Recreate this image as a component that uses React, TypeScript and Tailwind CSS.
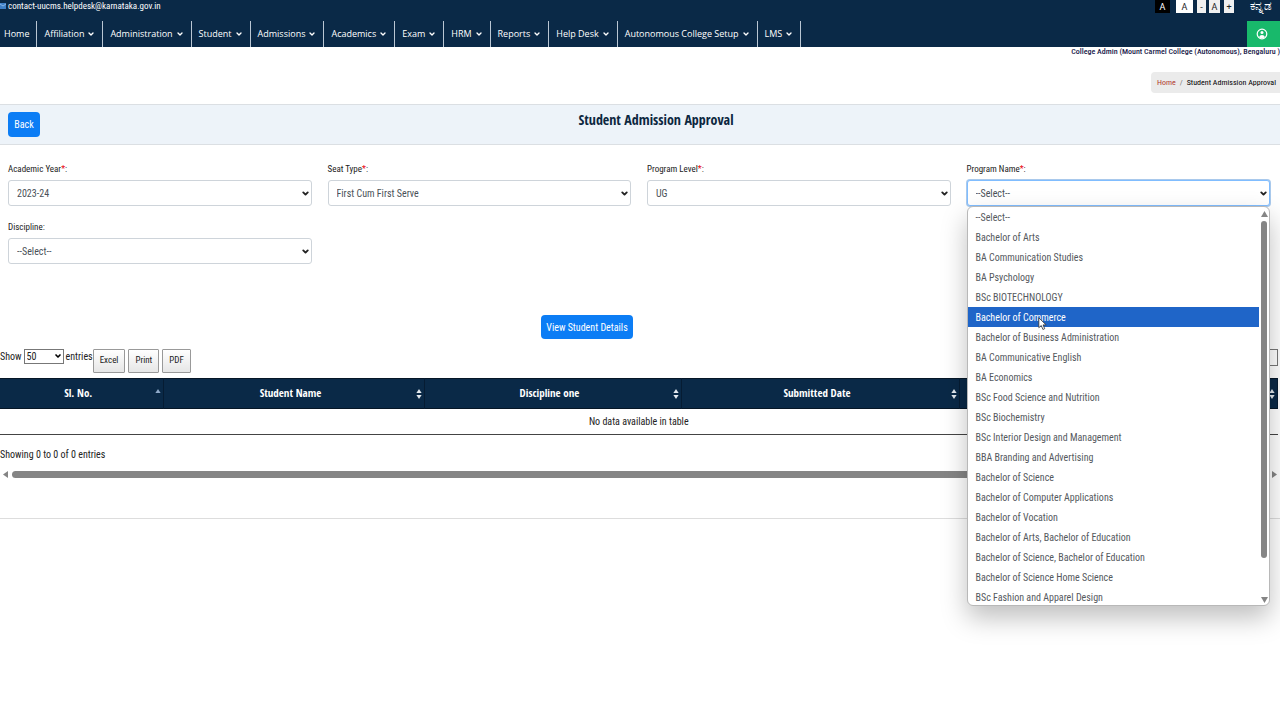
import { useState } from 'react';
import type { ReactNode } from 'react';
import { ChevronDown } from 'lucide-react';

const MENU = [
  'Affiliation',
  'Administration',
  'Student',
  'Admissions',
  'Academics',
  'Exam',
  'HRM',
  'Reports',
  'Help Desk',
  'Autonomous College Setup',
  'LMS',
];

const PROGRAMS = [
  '--Select--',
  'Bachelor of Arts',
  'BA Communication Studies',
  'BA Psychology',
  'BSc BIOTECHNOLOGY',
  'Bachelor of Commerce',
  'Bachelor of Business Administration',
  'BA Communicative English',
  'BA Economics',
  'BSc Food Science and Nutrition',
  'BSc Biochemistry',
  'BSc Interior Design and Management',
  'BBA Branding and Advertising',
  'Bachelor of Science',
  'Bachelor of Computer Applications',
  'Bachelor of Vocation',
  'Bachelor of Arts, Bachelor of Education',
  'Bachelor of Science, Bachelor of Education',
  'Bachelor of Science Home Science',
  'BSc Fashion and Apparel Design',
];

function Field({ id, label, required, options, active, children }: {
  id: string;
  label: string;
  required?: boolean;
  options: string[];
  active?: boolean;
  children?: ReactNode;
}) {
  return (
    <div>
      <label htmlFor={id} className="block h-[18px] mb-0.5 text-[9px] leading-[18px] text-[#222]">
        {label}
        {required && <span className="text-red-600">*</span>}:
      </label>
      <div className="relative">
        <select
          id={id}
          className={`block w-full h-[26px] pl-2 pr-5 appearance-none rounded-[3px] border bg-white text-[10px] text-[#495057] outline-none ${active ? 'border-[#80bdff] ring-1 ring-[#a9c9ec]' : 'border-[#ced4da]'}`}
        >
          {options.map(o => <option key={o}>{o}</option>)}
        </select>
        <ChevronDown className="absolute right-0.5 top-[9px] size-[9px] text-[#222] pointer-events-none" strokeWidth={5} />
        {children}
      </div>
    </div>
  );
}

function ProgramList() {
  const [hovered, setHovered] = useState(5);

  return (
    <div className="absolute left-0 top-full z-20 flex w-full rounded-md border border-[#b8b8b8] bg-white pb-px shadow-[0_12px_26px_rgba(0,0,0,0.25)]">
      <ul role="listbox" aria-label="Program Name" className="flex-1 h-[397px] overflow-hidden">
        {PROGRAMS.map((name, i) => (
          <li
            key={name}
            role="option"
            aria-selected={i === hovered}
            onMouseEnter={() => setHovered(i)}
            className={`h-5 px-2 pt-px text-[10px] leading-5 whitespace-nowrap ${i === hovered ? 'bg-[#1f65c8] text-white' : 'text-[#55595e]'}`}
          >
            {name}
          </li>
        ))}
      </ul>
      <div className="flex flex-col items-center w-[10px] pt-1 pb-px gap-1">
        <svg className="w-[7px] h-[6px] fill-[#858585]" viewBox="0 0 7 6"><path d="M3.5 0 7 6H0Z" /></svg>
        <div className="w-[6px] h-[337px] rounded-full bg-[#858585]" />
        <svg className="w-[7px] h-[6px] mt-auto fill-[#858585]" viewBox="0 0 7 6"><path d="M3.5 6 7 0H0Z" /></svg>
      </div>
      {/* mouse pointer */}
      <svg className="absolute left-[70px] top-[110px] w-[9px] h-[14px]" viewBox="0 0 11 17">
        <path d="M1 1v12l3-2.6 2 4.8 2.2-1-2-4.6H10Z" fill="#fff" stroke="#333" strokeWidth="1" />
      </svg>
    </div>
  );
}

function SortIcon({ asc }: { asc?: boolean }) {
  return (
    <svg className="w-[6px] h-[10px] shrink-0" viewBox="0 0 6 10">
      <path d="M3 0 5.6 4H.4Z" fill={asc ? '#8fa9c9' : '#e4e9ef'} />
      {!asc && <path d="M3 10 5.6 6H.4Z" fill="#e4e9ef" />}
    </svg>
  );
}

function HeadCell({ children, asc, width }: { children?: ReactNode; asc?: boolean; width?: string }) {
  return (
    <th className={`${width ?? ''} h-[30px] border-r border-[#061c33] px-0.5`}>
      <div className="flex items-center">
        <span className="flex-1">{children}</span>
        <SortIcon asc={asc} />
      </div>
    </th>
  );
}

export default function App() {
  return (
    <div className="min-h-screen overflow-x-hidden bg-white font-['Roboto_Condensed','Roboto',sans-serif] text-[#222]">
      <header className="bg-[#0a2947] text-white">
        <div className="flex justify-between h-[21px]">
          <a href="mailto:contact-uucms.helpdesk@karnataka.gov.in" className="flex items-center gap-0.5 h-3 text-[9px] leading-3">
            <svg className="w-[6px] h-[6px]" viewBox="0 0 6 6">
              <path d="M0 0h6v6H0Z" fill="#3f80c8" />
              <path d="m0 1 3 2 3-2" fill="none" stroke="#9cc4ee" strokeWidth=".8" />
            </svg>
            contact-uucms.helpdesk@karnataka.gov.in
          </a>
          <div className="flex h-[13px] pr-2 text-[9px] leading-3 text-[#222] font-['Roboto',sans-serif]">
            <button className="w-[15px] bg-black text-white">A</button>
            <button className="w-[17px] ml-1.5 bg-white">A</button>
            <button className="w-[9px] ml-1 bg-[#f0f0f0]">-</button>
            <button className="w-[11px] ml-[3px] bg-[#f0f0f0]">A</button>
            <button className="w-[10px] ml-1 bg-[#f0f0f0]">+</button>
            <a href="#kn" lang="kn" className="ml-4 text-[12px] leading-3 text-white">ಕನ್ನಡ</a>
          </div>
        </div>
        <nav className="flex h-[26px] text-[9px] font-['Open_Sans',sans-serif] font-medium">
          <a href="#home" className="flex items-center pl-1 pr-[7px] border-r border-[#b9c6d3]">Home</a>
          {MENU.map(item => (
            <button key={item} className="flex items-center gap-[3px] px-[7px] border-r border-[#b9c6d3] whitespace-nowrap">
              {item}
              <ChevronDown className="size-2" strokeWidth={4} />
            </button>
          ))}
          <button aria-label="Account" className="flex items-center justify-center w-[33px] pr-1 ml-auto bg-[#18b96b]">
            <svg className="size-3" viewBox="0 0 12 12" fill="none" stroke="#fff" strokeWidth="1.2">
              <circle cx="6" cy="6" r="4.8" />
              <circle cx="6" cy="4.6" r="1.5" fill="#fff" stroke="none" />
              <path d="M3.2 9.2c.4-3 5.200-3 5.600 0-1.600 1.500-4 1.500-5.600 0Z" fill="#fff" stroke="none" />
            </svg>
          </button>
        </nav>
      </header>

      <p className="h-[10px] text-right text-[8px] leading-[10px] font-medium text-[#1b1b4b]">
        College Admin (Mount Carmel College (Autonomous), Bengaluru )
      </p>
      <div className="flex justify-end h-[47px] pt-[15px]">
        <ol className="flex items-center gap-1 h-[21px] pl-1.5 pr-1 rounded-l bg-[#ebebeb] text-[8px]">
          <li><a href="#home" className="text-[#b03a2e]">Home</a></li>
          <li className="text-[#777]">/</li>
          <li className="text-black">Student Admission Approval</li>
        </ol>
      </div>

      <div className="grid grid-cols-[1fr_auto_1fr] h-[41px] pl-2 pt-[7px] border-y border-[#dbdfe3] bg-[#edf3f9]">
        <button className="w-8 h-[25px] rounded-sm bg-[#0c7df5] text-[10px] text-white">Back</button>
        <h1 className="pl-6 text-[14px] leading-4 font-bold font-['Open_Sans_Condensed','Roboto_Condensed',sans-serif] text-[#0c2740]">
          Student Admission Approval
        </h1>
      </div>

      <form className="grid grid-cols-4 gap-x-4 gap-y-3 pt-[15px] pl-2 pr-2.5">
        <Field id="year" label="Academic Year" required options={['2023-24']} />
        <Field id="seat" label="Seat Type" required options={['First Cum First Serve']} />
        <Field id="level" label="Program Level" required options={['UG']} />
        <Field id="program" label="Program Name" required options={PROGRAMS} active>
          <ProgramList />
        </Field>
        <Field id="discipline" label="Discipline" options={['--Select--']} />
      </form>

      <div className="flex justify-center pt-[51px] pr-[106px]">
        <button className="w-[92px] h-6 rounded-sm bg-[#0c7df5] text-[10px] text-white whitespace-nowrap">
          View Student Details
        </button>
      </div>

      <section className="pt-[10px]">
        <div className="flex items-start h-[29px] pr-0.5 text-[10px]">
          <label htmlFor="len" className="leading-4">Show</label>
          <div className="relative mx-0.5">
            <select id="len" className="block w-10 h-[15px] pl-0.5 appearance-none border border-[#777] bg-white leading-3">
              <option>50</option>
            </select>
            <ChevronDown className="absolute right-0.5 top-[3px] size-2 text-black pointer-events-none" strokeWidth={5} />
          </div>
          <span className="leading-4">entries</span>
          <div className="flex gap-[3px] text-[9px]">
            {['Excel', 'Print', 'PDF'].map(b => (
              <button key={b} className="h-6 px-1.5 rounded-[1px] border border-[#999] bg-linear-to-b from-white to-[#e6e6e6]">{b}</button>
            ))}
          </div>
          <input type="search" aria-label="Search" className="w-32 h-[17px] ml-auto border border-[#777]" />
        </div>

        <div className="pr-0.5">
          <table className="w-full table-fixed border-collapse border-b border-[#444]">
            <thead className="bg-[#0a2947] text-[11px] font-['Open_Sans_Condensed','Roboto_Condensed',sans-serif] text-white">
              <tr className="border-y border-[#061626]">
                <HeadCell width="w-[163px]" asc>Sl. No.</HeadCell>
                <HeadCell width="w-[261px]">Student Name</HeadCell>
                <HeadCell width="w-[257px]">Discipline one</HeadCell>
                <HeadCell width="w-[278px]">Submitted Date</HeadCell>
                <HeadCell />
              </tr>
            </thead>
            <tbody>
              <tr>
                <td colSpan={5} className="h-[26px] text-center text-[10px]">No data available in table</td>
              </tr>
            </tbody>
          </table>
        </div>
        <p className="pt-3 text-[10px] leading-4">Showing 0 to 0 of 0 entries</p>
        <div className="flex items-center gap-1 h-4 mt-[3px] px-[3px]">
          <svg className="w-[5px] h-[7px] fill-[#858585]" viewBox="0 0 5 7"><path d="M0 3.5 5 0v7Z" /></svg>
          <div className="flex-1 h-[7px] mr-2 rounded-full bg-[#858585]" />
          <svg className="w-[5px] h-[7px] fill-[#858585]" viewBox="0 0 5 7"><path d="M5 3.5 0 0v7Z" /></svg>
        </div>
      </section>
      <hr className="mt-9 border-[#ddd]" />
    </div>
  );
}
